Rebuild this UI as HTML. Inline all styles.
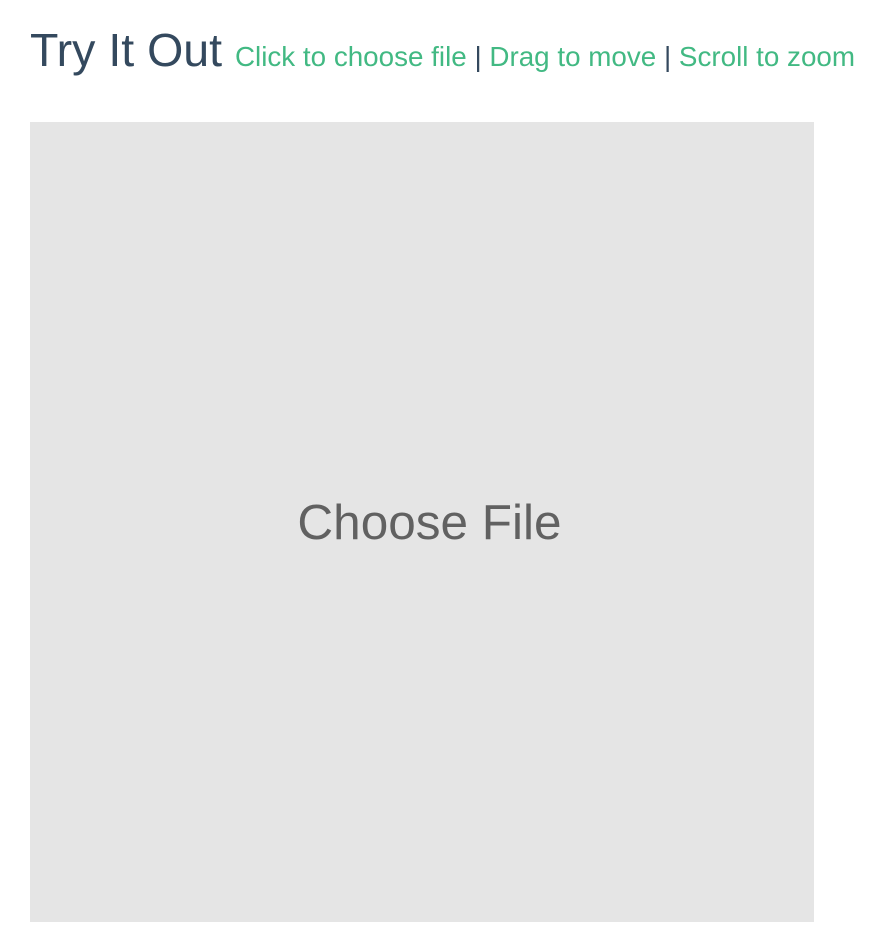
<!DOCTYPE html>
<html><head><style>
html,body{margin:0;padding:0;background:#fff;width:886px;height:952px;overflow:hidden;}
h2{position:absolute;left:30px;top:23px;margin:0;font:400 46.5px/1.2 "Liberation Sans",sans-serif;color:#34495e;white-space:nowrap;}
h2 small{font-size:27.8px;color:#42b983;}
h2 small span{color:#34495e;}
.box{position:absolute;left:30px;top:122px;width:784px;height:800px;background:#e5e5e5;}
.box div{position:absolute;left:15px;right:0;top:372px;text-align:center;font:400 49.5px "Liberation Sans",sans-serif;color:#616161;}
</style></head><body>
<h2>Try It Out <small>Click to choose file <span>|</span> Drag to move <span>|</span> Scroll to zoom</small></h2>
<div class="box"><div>Choose File</div></div>
</body></html>
